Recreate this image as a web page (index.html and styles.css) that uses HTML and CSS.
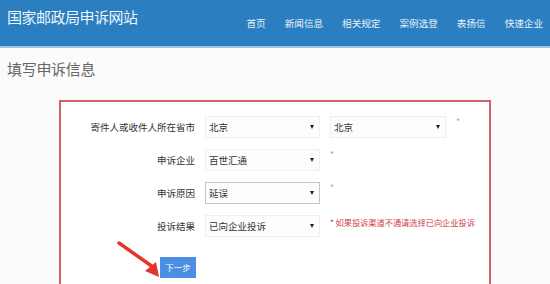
FILE: index.html
```html
<!DOCTYPE html>
<html lang="zh-CN">
<head>
    <meta charset="UTF-8">
    <meta name="viewport" content="width=device-width, initial-scale=1.0">
    <title>国家邮政局申诉网站</title>
    <link rel="stylesheet" href="styles.css">
</head>
<body>
    <div class="topbar">
        <div class="site-title">国家邮政局申诉网站</div>
        <ul class="nav">
            <li>首页</li>
            <li>新闻信息</li>
            <li>相关规定</li>
            <li>案例选登</li>
            <li>表扬信</li>
            <li>快速企业</li>
        </ul>
    </div>

    <h2 class="page-title">填写申诉信息</h2>

    <div class="form-box">
        <div class="form-row">
            <label>寄件人或收件人所在省市</label>
            <div class="select"><span>北京</span><i class="caret"></i></div>
            <div class="select wide"><span>北京</span><i class="caret"></i></div>
            <span class="req">*</span>
        </div>
        <div class="form-row">
            <label>申诉企业</label>
            <div class="select"><span>百世汇通</span><i class="caret"></i></div>
            <span class="req">*</span>
        </div>
        <div class="form-row">
            <label>申诉原因</label>
            <div class="select focused"><span>延误</span><i class="caret"></i></div>
            <span class="req">*</span>
        </div>
        <div class="form-row">
            <label>投诉结果</label>
            <div class="select"><span>已向企业投诉</span><i class="caret"></i></div>
            <span class="note">* 如果投诉渠道不通请选择已向企业投诉</span>
        </div>
        <div class="btn-row">
            <button class="next-btn">下一步</button>
        </div>
    </div>

    <!-- annotation arrow pointing at the button -->
    <svg class="arrow" width="50" height="40" viewBox="0 0 50 40">
        <path d="M2 2 L36 26" stroke="#e8322c" stroke-width="3.5" stroke-linecap="round"/>
        <path d="M28 30 L42 36 L39 21 Z" fill="#e8322c"/>
    </svg>
</body>
</html>
```

FILE: styles.css
```css
* {
    margin: 0;
    padding: 0;
    box-sizing: border-box;
    font-family: 'Noto Sans CJK SC', 'Noto Sans', sans-serif;
}

body {
    background: #fbfbfb;
    width: 550px;
    height: 284px;
    overflow: hidden;
    position: relative;
}

.topbar {
    height: 48px;
    background: #2b7fc0;
    border-bottom: 2px solid #9cc6e6;
    display: flex;
    justify-content: space-between;
    padding: 0 7px;
}

.site-title {
    color: #eef5fb;
    font-size: 15px;
    line-height: 15px;
    margin-top: 9px;
    letter-spacing: -0.5px;
}

.nav {
    list-style: none;
    display: flex;
    gap: 19px;
    margin-top: 17px;
}

.nav li {
    color: #e6f0f8;
    font-size: 9.6px;
    line-height: 12px;
}

.page-title {
    color: #666;
    font-size: 15px;
    font-weight: normal;
    line-height: 16px;
    margin: 13px 0 0 7px;
    letter-spacing: -0.3px;
}

.form-box {
    margin: 23px 0 0 59px;
    width: 432px;
    height: 190px;
    background: #fff;
    border: 2px solid #d0626c;
    padding-top: 14px;
}

.form-row {
    display: flex;
    align-items: center;
    height: 22px;
    margin-bottom: 11px;
}

.form-row label {
    width: 134px;
    text-align: right;
    font-size: 9.5px;
    color: #333;
    margin-right: 10px;
}

.select {
    width: 115px;
    height: 22px;
    border: 1px solid #efefef;
    background: #fdfdfd;
    display: flex;
    align-items: center;
    justify-content: space-between;
    padding: 0 5px 0 3px;
    font-size: 9.5px;
    color: #333;
    margin-right: 10px;
}

.select.wide {
    width: 116px;
}

.select.focused {
    border-color: #c4c4c4;
}

.caret {
    width: 0;
    height: 0;
    border-left: 2.5px solid transparent;
    border-right: 2.5px solid transparent;
    border-top: 4px solid #222;
}

.req {
    align-self: flex-start;
    color: #aaa;
    font-size: 9px;
    line-height: 9px;
    margin-top: 1px;
}

.note {
    align-self: flex-start;
    color: #d0404c;
    font-size: 8.3px;
    line-height: 10px;
    margin-top: 2px;
    letter-spacing: -0.1px;
}

.btn-row {
    padding-left: 99px;
    padding-top: 4px;
}

.next-btn {
    width: 36px;
    height: 21px;
    background: #4a8fe2;
    color: #fff;
    border: none;
    font-size: 8.5px;
}

.arrow {
    position: absolute;
    left: 117px;
    top: 241px;
}
```
